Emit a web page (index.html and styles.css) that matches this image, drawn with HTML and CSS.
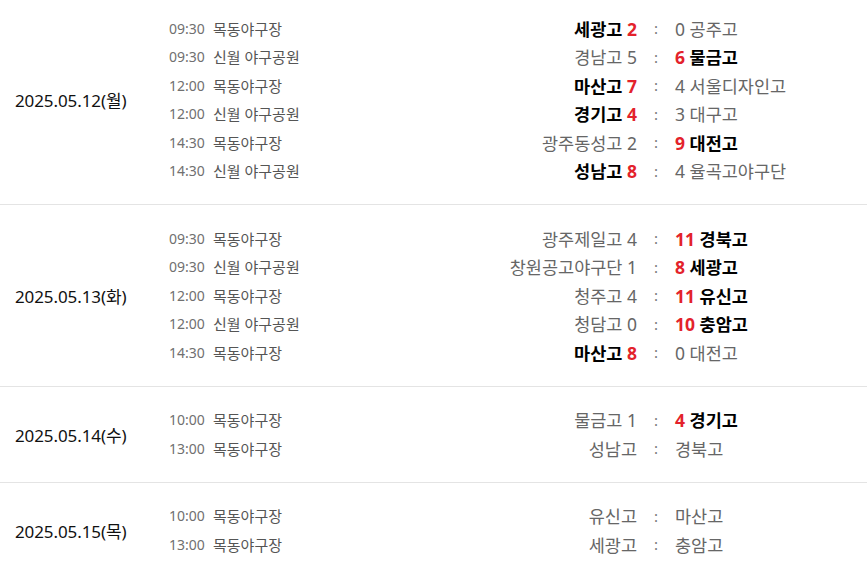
FILE: index.html
```html
<!DOCTYPE html>
<html lang="ko">
<head>
<meta charset="utf-8">
<title>경기 일정</title>
<link rel="stylesheet" href="styles.css">
</head>
<body>
<div class="schedule">
  <section class="day">
    <div class="date">2025.05.12(월)</div>
    <div class="games">
      <div class="game"><span class="time">09:30</span><span class="venue">목동야구장</span><span class="home"><b class="win">세광고</b> <em class="score">2</em></span><span class="colon">:</span><span class="away">0 공주고</span></div>
      <div class="game"><span class="time">09:30</span><span class="venue">신월 야구공원</span><span class="home">경남고 5</span><span class="colon">:</span><span class="away"><em class="score">6</em> <b class="win">물금고</b></span></div>
      <div class="game"><span class="time">12:00</span><span class="venue">목동야구장</span><span class="home"><b class="win">마산고</b> <em class="score">7</em></span><span class="colon">:</span><span class="away">4 서울디자인고</span></div>
      <div class="game"><span class="time">12:00</span><span class="venue">신월 야구공원</span><span class="home"><b class="win">경기고</b> <em class="score">4</em></span><span class="colon">:</span><span class="away">3 대구고</span></div>
      <div class="game"><span class="time">14:30</span><span class="venue">목동야구장</span><span class="home">광주동성고 2</span><span class="colon">:</span><span class="away"><em class="score">9</em> <b class="win">대전고</b></span></div>
      <div class="game"><span class="time">14:30</span><span class="venue">신월 야구공원</span><span class="home"><b class="win">성남고</b> <em class="score">8</em></span><span class="colon">:</span><span class="away">4 율곡고야구단</span></div>
    </div>
  </section>
  <section class="day">
    <div class="date">2025.05.13(화)</div>
    <div class="games">
      <div class="game"><span class="time">09:30</span><span class="venue">목동야구장</span><span class="home">광주제일고 4</span><span class="colon">:</span><span class="away"><em class="score">11</em> <b class="win">경북고</b></span></div>
      <div class="game"><span class="time">09:30</span><span class="venue">신월 야구공원</span><span class="home">창원공고야구단 1</span><span class="colon">:</span><span class="away"><em class="score">8</em> <b class="win">세광고</b></span></div>
      <div class="game"><span class="time">12:00</span><span class="venue">목동야구장</span><span class="home">청주고 4</span><span class="colon">:</span><span class="away"><em class="score">11</em> <b class="win">유신고</b></span></div>
      <div class="game"><span class="time">12:00</span><span class="venue">신월 야구공원</span><span class="home">청담고 0</span><span class="colon">:</span><span class="away"><em class="score">10</em> <b class="win">충암고</b></span></div>
      <div class="game"><span class="time">14:30</span><span class="venue">목동야구장</span><span class="home"><b class="win">마산고</b> <em class="score">8</em></span><span class="colon">:</span><span class="away">0 대전고</span></div>
    </div>
  </section>
  <section class="day">
    <div class="date">2025.05.14(수)</div>
    <div class="games">
      <div class="game"><span class="time">10:00</span><span class="venue">목동야구장</span><span class="home">물금고 1</span><span class="colon">:</span><span class="away"><em class="score">4</em> <b class="win">경기고</b></span></div>
      <div class="game"><span class="time">13:00</span><span class="venue">목동야구장</span><span class="home">성남고</span><span class="colon">:</span><span class="away">경북고</span></div>
    </div>
  </section>
  <section class="day">
    <div class="date">2025.05.15(목)</div>
    <div class="games">
      <div class="game"><span class="time">10:00</span><span class="venue">목동야구장</span><span class="home">유신고</span><span class="colon">:</span><span class="away">마산고</span></div>
      <div class="game"><span class="time">13:00</span><span class="venue">목동야구장</span><span class="home">세광고</span><span class="colon">:</span><span class="away">충암고</span></div>
    </div>
  </section>
</div>
</body>
</html>
```
FILE: styles.css
```css
html, body {
  margin: 0;
  padding: 0;
  background: #fff;
}
body {
  font-family: "Noto Sans", "Noto Sans CJK KR", sans-serif;
  color: #222;
}
.schedule {
  width: 867px;
}
.day {
  display: flex;
  padding: 19px 0;
  border-bottom: 1px solid #e4e4e4;
}
.day:first-child {
  padding-top: 14px;
}
.date {
  width: 154px;
  padding-left: 15px;
  display: flex;
  align-items: center;
  font-size: 17px;
  color: #111;
  letter-spacing: -0.1px;
}
.games {
  flex: 1;
}
.game {
  display: grid;
  grid-template-columns: 44px 110px 314px 38px 1fr;
  align-items: center;
  height: 28.5px;
}
.time {
  font-size: 14px;
  color: #707070;
}
.venue {
  font-size: 15px;
  color: #555;
}
.home, .away {
  font-size: 17.5px;
  color: #666;
  white-space: nowrap;
}
.home {
  text-align: right;
}
.colon {
  text-align: center;
  font-size: 15px;
  color: #777;
}
.win {
  font-weight: 700;
  color: #000;
}
.score {
  font-style: normal;
  font-weight: 700;
  color: #e3222b;
}
```
